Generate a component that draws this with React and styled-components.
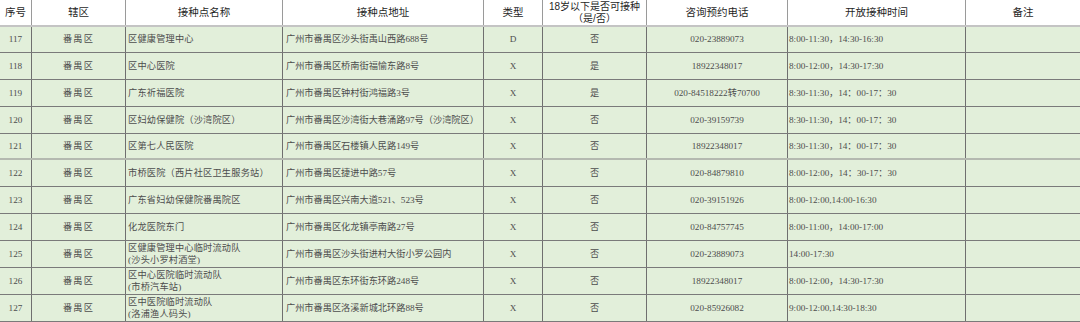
import React from "react";
import styled, { createGlobalStyle } from "styled-components";

const GlobalStyle = createGlobalStyle`
  html, body {
    margin: 0;
    padding: 0;
    background: #ffffff;
  }
  * {
    box-sizing: border-box;
  }
`;

const columns = "32px 94px 157px 201px 59px 104px 141px 178px 114px";

const headers = [
  ["序号"],
  ["辖区"],
  ["接种点名称"],
  ["接种点地址"],
  ["类型"],
  ["18岁以下是否可接种", "（是/否）"],
  ["咨询预约电话"],
  ["开放接种时间"],
  ["备注"],
];

const rows = [
  { no: "117", h: 26, name: ["区健康管理中心"], addr: "广州市番禺区沙头街禹山西路688号", type: "D", minor: "否", tel: "020-23889073", time: "8:00-11:30，14:30-16:30" },
  { no: "118", h: 27, name: ["区中心医院"], addr: "广州市番禺区桥南街福愉东路8号", type: "X", minor: "是", tel: "18922348017", time: "8:00-12:00，14:30-17:30" },
  { no: "119", h: 27, name: ["广东祈福医院"], addr: "广州市番禺区钟村街鸿福路3号", type: "X", minor: "是", tel: "020-84518222转70700", time: "8:30-11:30，14：00-17：30" },
  { no: "120", h: 27, name: ["区妇幼保健院（沙湾院区）"], addr: "广州市番禺区沙湾街大巷涌路97号（沙湾院区）", type: "X", minor: "否", tel: "020-39159739", time: "8:30-11:30，14：00-17：30" },
  { no: "121", h: 26, name: ["区第七人民医院"], addr: "广州市番禺区石楼镇人民路149号", type: "X", minor: "否", tel: "18922348017", time: "8:30-11:30，14：00-17：30", thick: true },
  { no: "122", h: 27, name: ["市桥医院（西片社区卫生服务站）"], addr: "广州市番禺区捷进中路57号", type: "X", minor: "否", tel: "020-84879810", time: "8:00-12:00，14：30-17：30" },
  { no: "123", h: 27, name: ["广东省妇幼保健院番禺院区"], addr: "广州市番禺区兴南大道521、523号", type: "X", minor: "否", tel: "020-39151926", time: "8:00-12:00,14:00-16:30" },
  { no: "124", h: 27, name: ["化龙医院东门"], addr: "广州市番禺区化龙镇亭南路27号", type: "X", minor: "否", tel: "020-84757745", time: "8:00-11:00，14:00-17:00" },
  { no: "125", h: 27, name: ["区健康管理中心临时流动队", "(沙头小罗村酒堂)"], addr: "广州市番禺区沙头街进村大街小罗公园内", type: "X", minor: "否", tel: "020-23889073", time: "14:00-17:30" },
  { no: "126", h: 27, name: ["区中心医院临时流动队", "(市桥汽车站)"], addr: "广州市番禺区东环街东环路248号", type: "X", minor: "否", tel: "18922348017", time: "8:00-12:00，14:30-17:30" },
  { no: "127", h: 27, name: ["区中医院临时流动队", "(洛浦渔人码头)"], addr: "广州市番禺区洛溪新城北环路88号", type: "X", minor: "否", tel: "020-85926082", time: "9:00-12:00,14:30-18:30" },
];

const Table = styled.div`
  width: 1080px;
  display: flex;
  flex-direction: column;
`;

const HeaderRow = styled.div`
  display: grid;
  grid-template-columns: ${columns};
  height: 27px;
  background: #ffffff;
  border-bottom: 2px solid #c4c4c4;
`;

const HeadCell = styled.div`
  display: flex;
  flex-direction: column;
  align-items: center;
  justify-content: center;
  border-right: 1px solid #9a9a9a;
  font-family: "Liberation Sans", "Noto Sans CJK SC", sans-serif;
  font-size: ${({ $small }) => ($small ? 10 : 10.5)}px;
  color: #1f1f1f;
  white-space: nowrap;

  &:last-child {
    border-right: none;
  }
`;

const HeadLine = styled.div`
  line-height: ${({ $small }) => ($small ? 11.5 : 13)}px;
  height: ${({ $small }) => ($small ? 11.5 : 13)}px;
`;

const DataRow = styled.div`
  display: grid;
  grid-template-columns: ${columns};
  height: ${({ $h }) => $h}px;
  background: #e2efda;
  border-bottom: ${({ $thick }) => ($thick ? "2px solid #b4b9b0" : "1px solid #7a7a7a")};
`;

const Cell = styled.div`
  display: flex;
  flex-direction: column;
  justify-content: center;
  align-items: ${({ $align }) =>
    $align === "left" ? "flex-start" : "center"};
  padding-left: ${({ $pad }) => $pad || 0}px;
  border-right: 1px solid #6f6f6f;
  font-family: "Liberation Serif", "Noto Sans CJK SC", serif;
  font-size: 9.2px;
  line-height: 12.5px;
  color: #4d4d4d;
  white-space: nowrap;
  overflow: hidden;

  &:last-child {
    border-right: none;
  }
`;

const Spaced = styled.span`
  letter-spacing: ${({ $ls }) => $ls || 0}px;
`;

export default function App() {
  return (
    <>
      <GlobalStyle />
      <Table>
        <HeaderRow>
          {headers.map((lines, i) => (
            <HeadCell key={i} $small={lines.length > 1}>
              {lines.map((l) => (
                <HeadLine key={l} $small={lines.length > 1}>
                  {l}
                </HeadLine>
              ))}
            </HeadCell>
          ))}
        </HeaderRow>
        {rows.map((r) => (
          <DataRow key={r.no} $h={r.h} $thick={r.thick}>
            <Cell>{r.no}</Cell>
            <Cell>
              <Spaced $ls={1.2}>番禺区</Spaced>
            </Cell>
            <Cell $align="left" $pad={2}>
              {r.name.map((l) => (
                <Spaced key={l} $ls={0.2}>{l}</Spaced>
              ))}
            </Cell>
            <Cell $align="left" $pad={3}>
              {r.addr}
            </Cell>
            <Cell>{r.type}</Cell>
            <Cell>{r.minor}</Cell>
            <Cell>{r.tel}</Cell>
            <Cell $align="left" $pad={1}>
              {r.time}
            </Cell>
            <Cell />
          </DataRow>
        ))}
      </Table>
    </>
  );
}
